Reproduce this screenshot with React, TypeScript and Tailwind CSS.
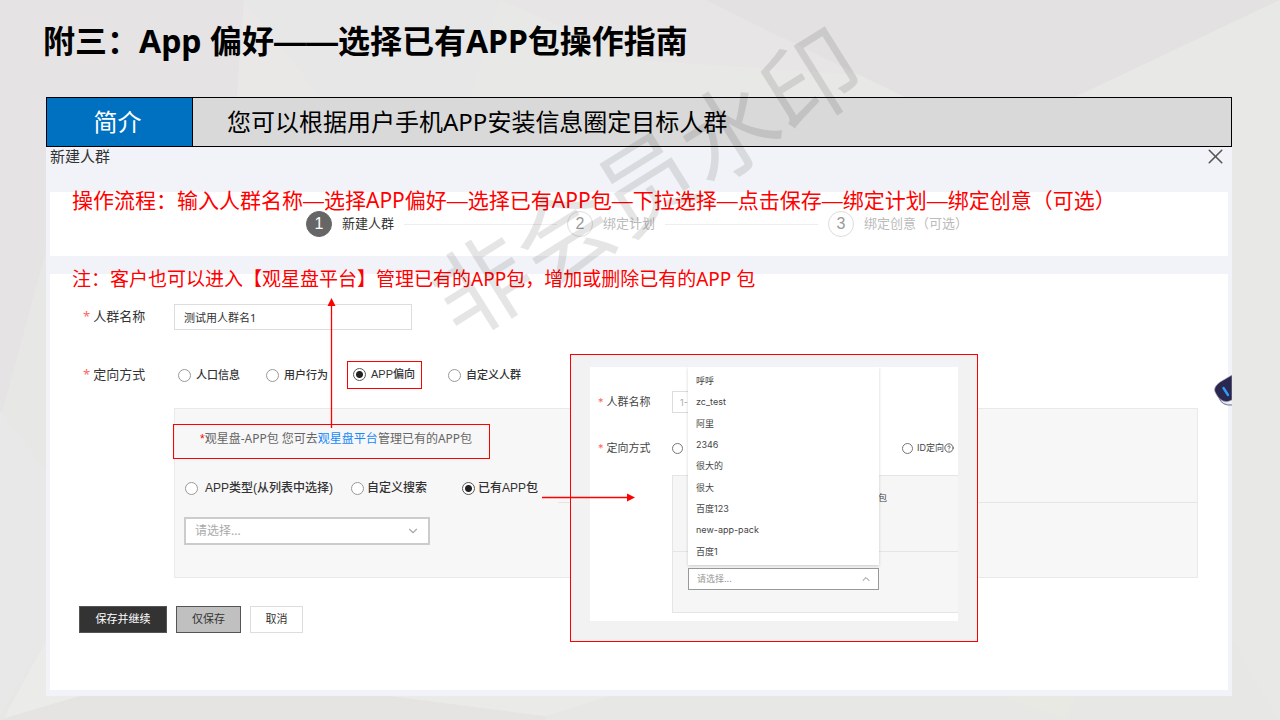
import type { ReactNode } from 'react';
import { ChevronDown, ChevronUp, CircleHelp, X } from 'lucide-react';

const audienceTypes = [
  { label: '人口信息', width: 'w-[88px]' },
  { label: '用户行为', width: 'w-[81px]' },
  { label: 'APP偏向', width: 'w-[101px]', checked: true },
  { label: '自定义人群', width: 'w-[90px]' },
];

const packSources = [
  { label: 'APP类型(从列表中选择)', width: 'w-[166px]', gap: 'gap-[7px]' },
  { label: '自定义搜索', width: 'w-[111px]', gap: 'gap-[3px]' },
  { label: '已有APP包', width: 'w-[90px]', gap: 'gap-[3px]', checked: true },
];

const packs = ['呼呼', 'zc_test', '阿里', '2346', '很大的', '很大', '百度123', 'new-app-pack', '百度1'];

const flow = ['操作流程：输入人群名称', '选择APP偏好', '选择已有APP包', '下拉选择', '点击保存', '绑定计划', '绑定创意（可选）'];

function Backdrop() {
  return (
    <svg
      className="absolute inset-0 w-full h-full"
      viewBox="0 0 1280 720"
      preserveAspectRatio="none"
      aria-hidden="true"
    >
      <rect width="1280" height="720" fill="#e7e7e6" />
      <polygon points="0,0 244,0 237,97 46,250 0,420" fill="#e5e3e4" />
      <polygon points="244,0 500,0 700,97 237,97" fill="#e8e7e7" />
      <polygon points="244,0 320,97 237,97" fill="#e9e8e7" />
      <polygon points="500,0 705,0 905,97 470,97" fill="#e8e8e6" />
      <polygon points="500,0 705,0 860,75 640,60" fill="#e7e5e5" />
      <polygon points="705,0 1280,0 1075,97 905,97" fill="#e3e1e2" />
      <polygon points="1280,0 1280,560 1232,640 1232,97 1075,97" fill="#e8e8e6" />
      <polygon points="0,410 46,470 46,640 0,716" fill="#e8e8e8" />
      <polygon points="46,640 46,696 80,696 4,718" fill="#ebebe9" />
      <polygon points="80,696 390,696 545,716 545,720 0,720" fill="#e5e4e2" />
      <polygon points="390,696 610,696 545,716" fill="#eaeae8" />
      <polygon points="1000,696 1075,696 1066,718" fill="#e8e9e2" />
      <polygon points="1232,640 1280,560 1280,720 1274,712" fill="#e8e9e6" />
    </svg>
  );
}

function Required({ children, className = '' }: { children: ReactNode; className?: string }) {
  return (
    <>
      <span className={`text-[#f66] ${className}`}>*</span>
      {children}
    </>
  );
}

// Liberation Sans draws the dash over the full em, so neighbours join up
function Dash({ children }: { children: string }) {
  return <span className="font-['Liberation_Sans'] leading-none">{children}</span>;
}

function Radio({ name, checked, small }: { name: string; checked?: boolean; small?: boolean }) {
  return (
    <input
      type="radio"
      name={name}
      defaultChecked={checked}
      className={`shrink-0 appearance-none rounded-full border bg-white checked:border-[#555] checked:bg-[radial-gradient(circle,#222_0_3px,#fff_4px)] ${
        small ? 'w-[11px] h-[11px] border-[#777]' : 'w-[13px] h-[13px] border-[#999]'
      }`}
    />
  );
}

function Step({ index, label, active }: { index: number; label: string; active?: boolean }) {
  return (
    <li className="flex items-center">
      <span
        className={`w-[26px] h-[26px] shrink-0 rounded-full border text-base leading-6 text-center font-['Liberation_Sans'] ${
          active ? 'bg-[#666] border-[#666] text-white' : 'border-[#ddd] text-[#999]'
        }`}
      >
        {index}
      </span>
      <span className={`ml-[10px] text-[13px] whitespace-nowrap ${active ? 'text-[#333]' : 'text-[#bbb]'}`}>
        {label}
      </span>
    </li>
  );
}

function PackPopup() {
  return (
    <div className="absolute left-[524px] top-[207px] w-[408px] h-[288px] border border-[#f00] bg-[#f2f2f2] pt-[6px] px-[19px] font-['Inter','Noto_Sans_CJK_SC',sans-serif] text-[#444]">
      <div className="relative h-[260px] overflow-hidden border-t-[6px] border-[#f2f3f8] bg-white">
        <div className="flex items-center h-[22px] mt-6 ml-2">
          <label htmlFor="popup-name" className="w-[74px] text-[11px] whitespace-nowrap">
            <Required className="mr-[3px]">人群名称</Required>
          </label>
          <input
            id="popup-name"
            placeholder="1-"
            className="w-[120px] h-[22px] border border-[#ddd] px-[7px] text-[9px] placeholder:text-[#aaa]"
          />
        </div>
        <div className="flex items-center h-5 mt-[25px] ml-2">
          <span className="w-[74px] text-[11px] whitespace-nowrap">
            <Required className="mr-[3px]">定向方式</Required>
          </span>
          <Radio name="popup-type" small />
          <label className="ml-auto mr-1 flex items-center gap-1 text-[9px] whitespace-nowrap">
            <Radio name="popup-type" small />
            <span className="flex items-center">
              ID定向
              <CircleHelp size={10} />
            </span>
          </label>
        </div>
        <div className="ml-[82px] mt-[17px] h-[138px] border border-r-0 border-[#e5e5e5] bg-[#f6f6f6] text-[9px]">
          <div className="h-[76px] border-b border-[#e5e5e5] pt-[15px] pl-[205px]">包</div>
          <div className="relative mt-4 ml-[15px] w-[191px]">
            <select
              aria-label="选择APP包"
              className="block w-full h-[22px] appearance-none border border-[#999] bg-white px-2 text-[#999]"
            >
              <option>请选择...</option>
            </select>
            <ChevronUp
              size={12}
              strokeWidth={2}
              className="absolute right-[7px] top-[5px] text-[#888] pointer-events-none"
            />
          </div>
        </div>
        <ul className="absolute left-[98px] top-0 w-[191px] h-[198px] py-[3px] flex flex-col bg-white text-[9px] shadow-[0_1px_3px_rgba(0,0,0,0.18)]">
          {packs.map((pack) => (
            <li key={pack} className="flex-1 flex items-center px-2">
              {pack}
            </li>
          ))}
        </ul>
      </div>
    </div>
  );
}

export default function App() {
  return (
    <main
      lang="zh-CN"
      className="relative min-h-screen overflow-hidden pl-[46px] pr-12 pb-6 font-['Noto_Sans','Noto_Sans_CJK_SC',sans-serif] text-[#333]"
    >
      <Backdrop />

      <div className="relative">
        <h1 className="-ml-[3px] pt-[17px] pb-8 text-[32px] leading-[48px] font-bold text-black whitespace-nowrap">
          附三：App 偏好<Dash>——</Dash>选择已有APP包操作指南
        </h1>

        <header className="flex h-[50px] border border-black bg-[#d9d9d9] text-2xl text-black">
          <h2 className="w-[146px] flex items-center justify-center border-r border-black bg-[#0070c0] pr-1 text-white">
            简介
          </h2>
          <p className="flex items-center pl-[34px] whitespace-nowrap">您可以根据用户手机APP安装信息圈定目标人群</p>
        </header>

        <section className="relative bg-[#f2f3f8] px-1 pb-[6px]">
          <div className="flex items-start justify-between h-[45px]">
            <h3 className="text-[15px] leading-[18px]">新建人群</h3>
            <button type="button" aria-label="关闭" className="-mt-[3px] text-[#555]">
              <X size={25} strokeWidth={1.5} />
            </button>
          </div>

          <ol className="flex items-center h-16 bg-white pl-64">
            <Step index={1} label="新建人群" active />
            <li className="w-[153px] mx-[10px] border-t border-[#eee]" aria-hidden="true" />
            <Step index={2} label="绑定计划" />
            <li className="w-[153px] mx-[10px] border-t border-[#eee]" aria-hidden="true" />
            <Step index={3} label="绑定创意（可选）" />
          </ol>

          <form className="mt-[18px] bg-white pt-[30px] pb-[57px] pl-[29px] pr-[30px]">
            <div className="flex items-center pl-1">
              <label htmlFor="name" className="w-[91px] text-[13px]">
                <Required className="mr-[3px]">人群名称</Required>
              </label>
              <input
                id="name"
                defaultValue="测试用人群名1"
                className="w-[238px] h-[26px] border border-[#ddd] px-[9px] text-[11px]"
              />
            </div>

            {/* Audience type */}
            <div className="flex items-center mt-[30px] pl-1">
              <span className="w-[91px] text-[13px]">
                <Required className="mr-[3px]">定向方式</Required>
              </span>
              <div className="flex items-center h-[29px] pl-1 font-['Liberation_Sans','Noto_Sans_CJK_SC',sans-serif] text-[11px] font-medium">
                {audienceTypes.map(({ label, width, checked }) => (
                  <div key={label} className={`flex ${width}`}>
                    <label
                      className={`flex items-center gap-[5px] h-7 whitespace-nowrap ${
                        checked ? 'w-[75px] pl-[5px] border border-[#f00]' : 'pt-[2px]'
                      }`}
                    >
                      <Radio name="type" checked={checked} />
                      {label}
                    </label>
                  </div>
                ))}
              </div>
            </div>

            {/* APP pack */}
            <div className="relative mt-[19px] ml-[95px] h-[170px] border border-[#e9e9e9] bg-[#f7f7f7] pt-[15px]">
              <div className="absolute left-[383px] right-0 top-[93px] border-t border-[#e5e5e5]" />
              <p className="-ml-[2px] flex items-center w-[317px] h-[35px] border border-[#f00] pl-[26px] pb-[5px] text-xs text-[#666] whitespace-nowrap">
                <span className="font-['Liberation_Sans'] text-[#f00]">*</span>观星盘-APP包&nbsp;您可去
                <a href="#" className="text-[#1989fa]">
                  观星盘平台
                </a>
                管理已有的APP包
              </p>
              <div className="flex items-center mt-[19px] h-5 pl-[10px] font-['Liberation_Sans','Noto_Sans_CJK_SC',sans-serif] text-xs font-medium">
                {packSources.map(({ label, width, gap, checked }) => (
                  <div key={label} className={width}>
                    <label className={`flex items-center whitespace-nowrap ${gap}`}>
                      <Radio name="source" checked={checked} />
                      {label}
                    </label>
                  </div>
                ))}
              </div>
              <div className="relative mt-[19px] ml-[9px] w-[246px]">
                <select
                  aria-label="已有APP包"
                  className="block w-full h-7 appearance-none border-2 border-[#ccc] bg-white px-[9px] text-xs text-[#aaa]"
                >
                  <option>请选择...</option>
                </select>
                <ChevronDown size={14} className="absolute right-[10px] top-[7px] text-[#aaa] pointer-events-none" />
              </div>
            </div>

            <div className="flex gap-[9px] mt-7 text-[11px]">
              <button type="button" className="w-[88px] h-[27px] border border-[#555] bg-[#333] text-white">
                保存并继续
              </button>
              <button type="button" className="w-[65px] h-[27px] border border-[#555] bg-[#c0c0c0]">
                仅保存
              </button>
              <button type="button" className="w-[53px] h-[27px] border border-[#ddd] bg-white">
                取消
              </button>
            </div>
          </form>

          {/* Assistant, half hidden behind the right edge */}
          <svg className="absolute right-0 top-[227px] w-[18px] h-8" viewBox="0 0 18 32" aria-hidden="true">
            <path d="M5 24 Q8 32 18 31" fill="#dfe3ee" stroke="#6b7290" strokeWidth="1" />
            <path d="M18 1 L6 8 Q-1 13 1 18 Q4 25 9 27 Q13 29 18 26 Z" fill="#2b2850" stroke="#b9bccb" strokeWidth="0.6" />
            <path d="M9.500 14 L14 21" stroke="#2f9bff" strokeWidth="2.400" strokeLinecap="round" />
          </svg>

          <PackPopup />

          {/* Annotations */}
          <p className="absolute left-[26px] top-[39px] text-[21px] leading-7 text-[#f00] whitespace-nowrap">
            {flow.map((step, i) => (
              <span key={step}>
                {i > 0 && <Dash>—</Dash>}
                {step}
              </span>
            ))}
          </p>
          <p className="absolute left-[26px] top-[118px] text-[19px] leading-7 text-[#f00] whitespace-nowrap">
            注：客户也可以进入【观星盘平台】管理已有的APP包，增加或删除已有的APP 包
          </p>
          <svg className="absolute left-[281px] top-[151px] w-[9px] h-[130px]" viewBox="0 0 9 130" aria-hidden="true">
            <path d="M4.500 130 V6" stroke="#f00" strokeWidth="1.300" />
            <path d="M4.500 0 L8.500 8 H0.500 Z" fill="#f00" />
          </svg>
          <svg className="absolute left-[496px] top-[346px] w-[93px] h-[9px]" viewBox="0 0 93 9" aria-hidden="true">
            <path d="M0 4.500 H87" stroke="#f00" strokeWidth="1.300" />
            <path d="M93 4.500 L85 8.500 V0.500 Z" fill="#f00" />
          </svg>
        </section>

        <span
          aria-hidden="true"
          className="absolute left-[355px] top-[122px] w-[485px] h-28 -rotate-[32deg] text-[97px] leading-[112px] font-['Noto_Sans_CJK_SC',sans-serif] text-black/10 whitespace-nowrap pointer-events-none"
        >
          非会员水印
        </span>
      </div>
    </main>
  );
}
